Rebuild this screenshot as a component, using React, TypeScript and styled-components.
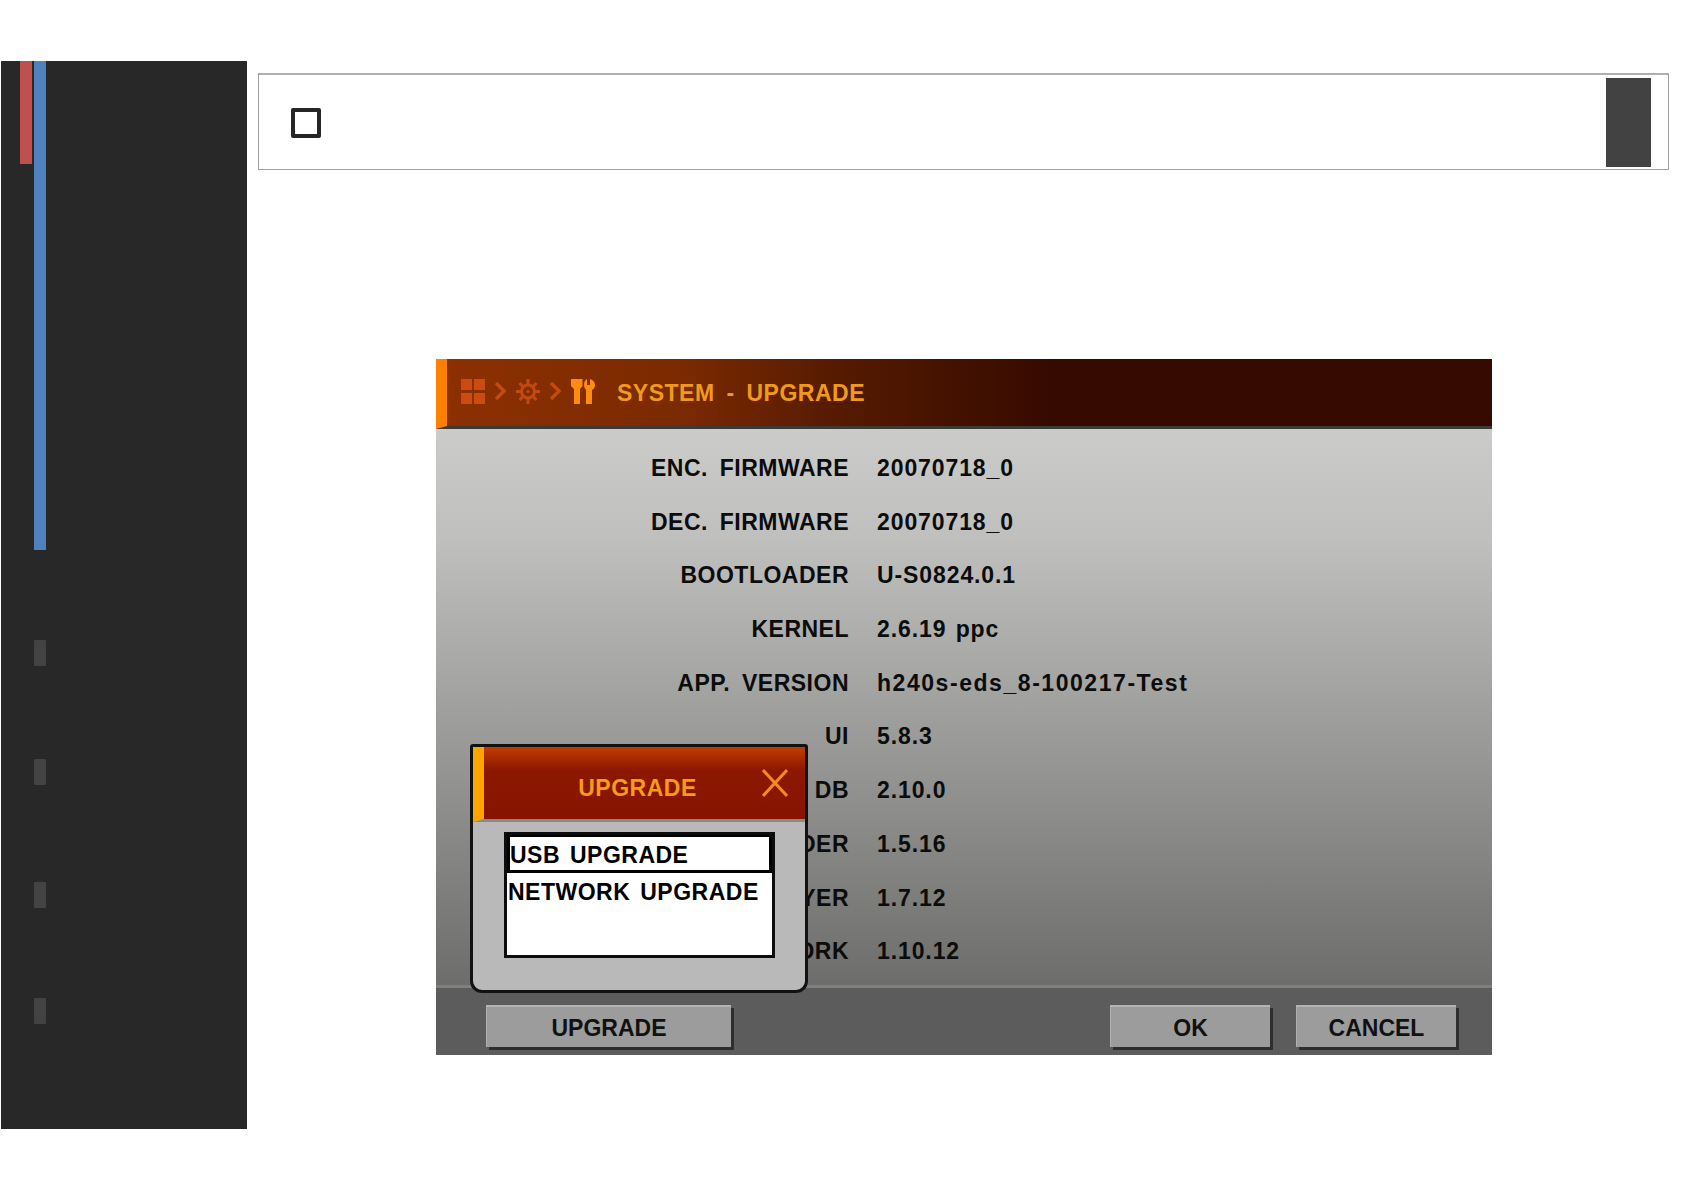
import React from "react";
import styled, { createGlobalStyle } from "styled-components";

const Global = createGlobalStyle`
  html, body { margin: 0; padding: 0; background: #fff; }
  body { font-family: "Liberation Sans", Arial, sans-serif; }
`;

const Page = styled.div`
  width: 1684px;
  height: 1190px;
  padding: 61px 15px 0 1px;
  box-sizing: border-box;
  display: flex;
  align-items: flex-start;
  background: #fff;
`;

const Sidebar = styled.aside`
  width: 246px;
  height: 1068px;
  flex: none;
  background: #282828;
  display: flex;
  padding-left: 19px;
  box-sizing: border-box;
  gap: 2px;
  align-items: flex-start;
`;

const RedTrack = styled.div`
  width: 12px;
  height: 103px;
  background: #c0504d;
`;

const BlueColumn = styled.div`
  width: 12px;
  display: flex;
  flex-direction: column;
  align-items: stretch;
`;

const BlueTrack = styled.div`
  height: 489px;
  background: #4f81bd;
`;

const Marker = styled.div<{ $top: number }>`
  height: 26px;
  margin-top: ${(p) => p.$top}px;
  background: #434343;
  border-radius: 1px;
`;

const Main = styled.main`
  flex: 1;
  margin-left: 11px;
  padding-top: 12px;
  display: flex;
  flex-direction: column;
`;

const TopBar = styled.div`
  height: 97px;
  box-sizing: border-box;
  border: 1px solid #a0a0a0;
  border-top: 2px solid #b0b0b0;
  display: flex;
  align-items: center;
  justify-content: space-between;
  padding: 2px 17px 1px 32px;
`;

const CheckBox = styled.div`
  width: 30px;
  height: 30px;
  box-sizing: border-box;
  border: 4px solid #262626;
  border-radius: 2px;
`;

const DarkBlock = styled.div`
  width: 45px;
  height: 89px;
  background: #424242;
`;

const Screen = styled.section`
  position: relative;
  width: 1056px;
  height: 696px;
  margin: 189px 0 0 178px;
  display: flex;
  flex-direction: column;
  font-weight: 700;
  color: #0c0c0c;
  font-size: 23px;
  word-spacing: 5px;
  letter-spacing: 0.5px;
`;

const Header = styled.header`
  height: 70px;
  box-sizing: border-box;
  flex: none;
  display: flex;
  align-items: center;
  padding-left: 14px;
  border-left: 11px solid #ff7f00;
  border-bottom: 3px solid #3a3a36;
  background: linear-gradient(90deg, #8c3000 0%, #7c2a00 22%, #541a00 38%, #360a00 58%, #360a00 100%);
  color: #f09a1c;
  svg { flex: none; display: block; }
`;

const Crumb = styled.span`
  display: flex;
  align-items: center;
  gap: 9px;
  margin-right: 22px;
  margin-bottom: 3px;
`;

const Title = styled.h1`
  margin: 2px 0 0;
  font: inherit;
`;

const Body = styled.div`
  flex: 1;
  background: linear-gradient(180deg, #cbcbc9 0%, #bfc0be 20%, #9b9b99 55%, #6d6d6b 100%);
  display: grid;
  grid-template-columns: 413px 1fr;
  grid-auto-rows: 53.7px;
  column-gap: 28px;
  padding-top: 13px;
  align-content: start;
`;

const Label = styled.div`
  text-align: right;
  line-height: 53.7px;
`;

const Value = styled.div<{ $spacing: number }>`
  line-height: 53.7px;
  letter-spacing: ${(p) => p.$spacing}px;
  word-spacing: 2px;
`;

const Footer = styled.footer`
  height: 70px;
  flex: none;
  box-sizing: border-box;
  border-top: 3px solid #80807e;
  background: #5c5c5c;
  display: flex;
  align-items: flex-start;
  padding: 17px 36px 0 50px;
  gap: 26px;
`;

const Btn = styled.button<{ $w: number; $push?: boolean }>`
  width: ${(p) => p.$w}px;
  height: 42px;
  padding: 2px 0 0;
  margin-left: ${(p) => (p.$push ? "auto" : "0")};
  font: inherit;
  color: #111;
  background: #9c9c9c;
  border: 0;
  border-top: 2px solid #b4b4b4;
  border-left: 1px solid #b0b0b0;
  box-shadow: 3px 3px 0 #2e2e2e;
`;

const Dialog = styled.div`
  position: absolute;
  left: 34px;
  top: 385px;
  width: 338px;
  height: 249px;
  box-sizing: border-box;
  border: 3px solid #121212;
  border-radius: 3px 3px 12px 12px;
  background: #b9b9b9;
  display: flex;
  flex-direction: column;
`;

const DialogHead = styled.div`
  height: 75px;
  flex: none;
  box-sizing: border-box;
  border-left: 11px solid #ffa500;
  background: linear-gradient(180deg, #c23c00 0%, #8c1800 32%, #851400 100%);
  border-bottom: 3px solid #8a8a88;
  color: #f59a1a;
  display: flex;
  align-items: center;
  justify-content: center;
  position: relative;
  padding: 10px 14px 0 0;
  svg { position: absolute; right: 17px; top: 22px; }
`;

const ListBox = styled.div`
  margin: 10px 30px 0 31px;
  height: 126px;
  box-sizing: border-box;
  border: 3px solid #0c0c0c;
  background: #fff;
  color: #000;
  word-spacing: 3px;
  display: flex;
  flex-direction: column;
`;

const ListRow = styled.div<{ $active?: boolean }>`
  height: 38px;
  flex: none;
  box-sizing: border-box;
  line-height: 36px;
  padding-left: 1px;
  border: ${(p) => (p.$active ? "3px solid #000" : "0")};
  border-top-width: ${(p) => (p.$active ? "2px" : "0")};
  ${(p) => (p.$active ? "padding-left: 0;" : "line-height: 38px;")}
`;

const rows: [string, string, number][] = [
  ["ENC. FIRMWARE", "20070718_0", 0.9],
  ["DEC. FIRMWARE", "20070718_0", 0.9],
  ["BOOTLOADER", "U-S0824.0.1", 0.9],
  ["KERNEL", "2.6.19 ppc", 0.9],
  ["APP. VERSION", "h240s-eds_8-100217-Test", 1.55],
  ["UI", "5.8.3", 0.9],
  ["DB", "2.10.0", 0.9],
  ["LOADER", "1.5.16", 0.9],
  ["PLAYER", "1.7.12", 0.9],
  ["NETWORK", "1.10.12", 0.9],
];

const GridIcon = () => (
  <svg width="24" height="25" viewBox="0 0 24 25" fill="#cc4c10">
    <rect x="0" y="0" width="11" height="11" />
    <rect x="13" y="0" width="11" height="11" />
    <rect x="0" y="14" width="11" height="11" />
    <rect x="13" y="14" width="11" height="11" />
  </svg>
);

const Chevron = () => (
  <svg width="13" height="20" viewBox="0 0 13 20" fill="none" stroke="#c44a10" strokeWidth="3.5">
    <path d="M2 2 L10 10 L2 18" />
  </svg>
);

const GearIcon = () => (
  <svg width="24" height="25" viewBox="0 0 24 25" fill="none" stroke="#c04a10">
    <circle cx="12" cy="12.5" r="6.5" strokeWidth="3" />
    <circle cx="12" cy="12.5" r="1.6" fill="#c04a10" stroke="none" />
    <path strokeWidth="3" d="M12 0v5M12 20v5M0 12.5h5M19 12.5h5M3.5 4l3.6 3.6M16.9 17.4 20.5 21M20.5 4l-3.6 3.6M7.1 17.4 3.5 21" />
  </svg>
);

const ToolsIcon = () => (
  <svg width="24" height="25" viewBox="0 0 24 25" fill="#ff8c10">
    <path d="M0 0h11.5v7L9 10v15H3V10L0 7z" />
    <path d="M13 6c0-3 1-5 3-6v6h3V0c3 1 5 3 5 6 0 2-1 4-3 5v14h-6V11c-1-1-2-3-2-5z" />
  </svg>
);

export default function App() {
  return (
    <>
      <Global />
      <Page>
        <Sidebar>
          <RedTrack />
          <BlueColumn>
            <BlueTrack />
            <Marker $top={90} />
            <Marker $top={93} />
            <Marker $top={97} />
            <Marker $top={90} />
          </BlueColumn>
        </Sidebar>
        <Main>
          <TopBar>
            <CheckBox />
            <DarkBlock />
          </TopBar>
          <Screen>
            <Header>
              <Crumb>
                <GridIcon />
                <Chevron />
                <GearIcon />
                <Chevron />
                <ToolsIcon />
              </Crumb>
              <Title>SYSTEM - UPGRADE</Title>
            </Header>
            <Body>
              {rows.map(([k, v, s]) => (
                <React.Fragment key={k}>
                  <Label>{k}</Label>
                  <Value $spacing={s}>{v}</Value>
                </React.Fragment>
              ))}
            </Body>
            <Footer>
              <Btn $w={245}>UPGRADE</Btn>
              <Btn $w={160} $push>OK</Btn>
              <Btn $w={160}>CANCEL</Btn>
            </Footer>
            <Dialog>
              <DialogHead>
                UPGRADE
                <svg width="26" height="28" viewBox="0 0 26 28" fill="none" stroke="#f58a1a" strokeWidth="3">
                  <path d="M1 1 L25 27 M25 1 L1 27" />
                </svg>
              </DialogHead>
              <ListBox>
                <ListRow $active>USB UPGRADE</ListRow>
                <ListRow>NETWORK UPGRADE</ListRow>
              </ListBox>
            </Dialog>
          </Screen>
        </Main>
      </Page>
    </>
  );
}
